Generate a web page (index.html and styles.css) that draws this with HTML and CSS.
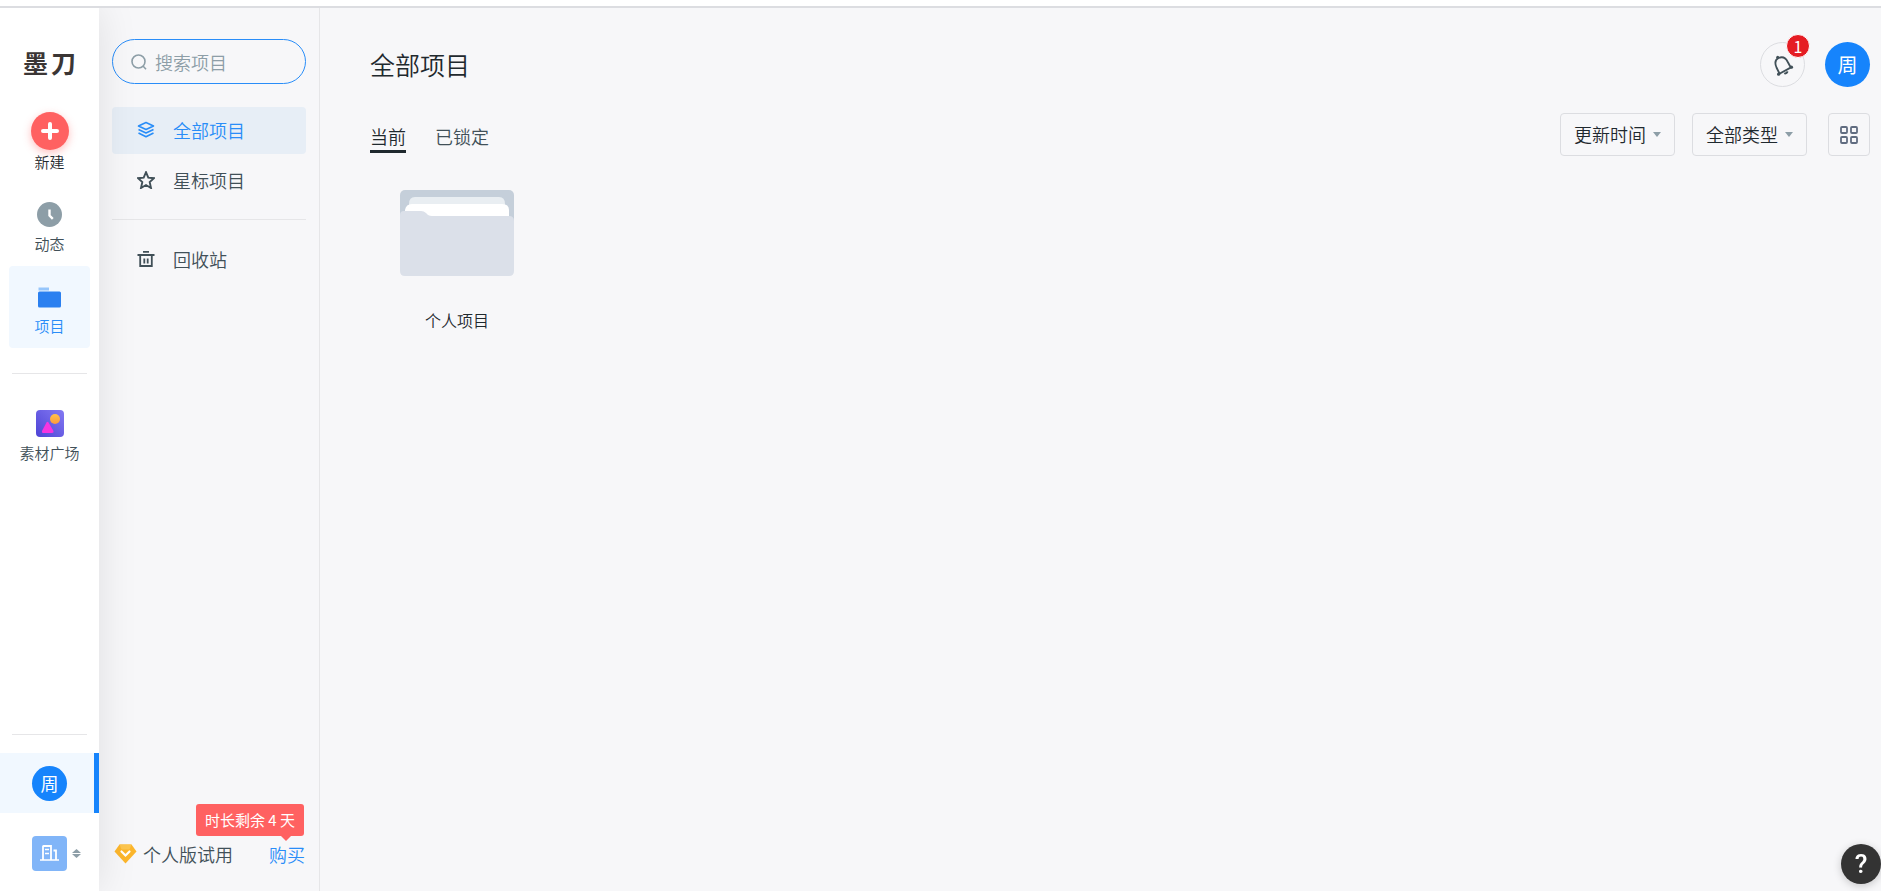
FILE: index.html
```html
<!DOCTYPE html>
<html lang="zh-CN">
<head>
    <meta charset="UTF-8">
    <meta name="viewport" content="width=device-width, initial-scale=1.0">
    <title>全部项目 - 墨刀</title>
    <link rel="stylesheet" href="styles.css">
</head>
<body>
    <div class="topbar"></div>

    <div class="app">
        <nav class="rail">
            <a class="logo" href="#"><span>墨</span><span>刀</span></a>

            <button class="rail-new" type="button">
                <span class="rail-new-circle">
                    <svg width="18" height="18" viewBox="0 0 18 18"><path d="M9 2v14M2 9h14" stroke="#fff" stroke-width="4" stroke-linecap="round"/></svg>
                </span>
                新建
            </button>

            <a class="rail-item" href="#">
                <svg width="25" height="25" viewBox="0 0 25 25"><circle cx="12.5" cy="12.5" r="12.5" fill="#8d9ea7"/><path d="M12.5 7.5v6l3.3 3.4" fill="none" stroke="#fff" stroke-width="2.4"/></svg>
                动态
            </a>
            <a class="rail-item active" href="#">
                <svg width="25" height="25" viewBox="0 0 25 25"><path d="M1.500 3.500h10.500v3H1.500z" fill="#96c6fb"/><rect x="1" y="7.500" width="23" height="16" rx="1.500" fill="#2b80f0"/></svg>
                项目
            </a>

            <hr class="rail-line">

            <a class="rail-item market" href="#">
                <svg width="28" height="27" viewBox="0 0 28 27">
                    <defs>
                        <linearGradient id="marketBg" x1="0" y1="1" x2="1" y2="0"><stop offset="0" stop-color="#4d43d6"/><stop offset="1" stop-color="#8479f2"/></linearGradient>
                        <linearGradient id="marketSun" x1="0" y1="0" x2="0" y2="1"><stop offset="0" stop-color="#ffc24a"/><stop offset="1" stop-color="#ff9a3c"/></linearGradient>
                    </defs>
                    <rect width="28" height="27" rx="4" fill="url(#marketBg)"/>
                    <path d="M10.500 12.500q1-1.500 2 0l5 8.500q.5 2-1.500 2H7q-1.500 0-1-2z" fill="#f535e0"/>
                    <circle cx="19" cy="9" r="5" fill="url(#marketSun)"/>
                </svg>
                素材广场
            </a>

            <div class="rail-bottom">
                <hr class="rail-line">
                <button class="team active" type="button"><span class="avatar">周</span></button>
                <button class="team" type="button" aria-label="企业">
                    <span class="company">
                        <svg width="19" height="16" viewBox="0 0 19 16" fill="none" stroke="#fff"><path d="M3 15V1.500Q3 1 3.500 1h7.500V15M13.500 5.500h2.500V15" stroke-width="1.800"/><path d="M5 4.500h4M5 8.500h4M0 15h19" stroke-width="1.600"/></svg>
                    </span>
                    <svg class="updown" width="9" height="9" viewBox="0 0 9 9"><path d="M4.500 0L9 4H0zM0 5h9L4.500 9z" fill="#8d9ea7"/></svg>
                </button>
            </div>
        </nav>

        <aside class="sidebar">
            <label class="search">
                <svg width="16" height="16" viewBox="0 0 16 16" fill="none" stroke="#8d9ea7" stroke-width="1.600"><circle cx="7.500" cy="7.500" r="6.500"/><path d="M12 12l3 3.200"/></svg>
                <input type="text" placeholder="搜索项目" aria-label="搜索项目">
            </label>

            <a class="side-item active" href="#">
                <svg width="18" height="18" viewBox="0 0 18 18" fill="none" stroke="currentColor" stroke-width="1.600" stroke-linejoin="round"><path d="M9 1.500l7.500 3.500L9 8.500 1.500 5zM1.500 8.500L9 12l7.500-3.500M1.500 12L9 15.800l7.500-3.800"/></svg>
                全部项目
            </a>
            <a class="side-item" href="#">
                <svg width="18" height="18" viewBox="0 0 18 18" fill="none" stroke="#415058" stroke-width="1.900"><path d="M9 1.200l2.300 5.400 5.700.6-4.300 3.900 1.300 5.900L9 14l-5 3 1.300-5.900L1 7.200l5.700-.6z"/></svg>
                星标项目
            </a>
            <hr class="side-line">
            <a class="side-item" href="#">
                <svg width="18" height="18" viewBox="0 0 18 18" fill="none" stroke="#415058" stroke-width="1.800"><path d="M.5 5h17M6 1.900h6M3.200 5v11h11.600V5M7.300 8.500v5M10.700 8.500v5"/></svg>
                回收站
            </a>

            <div class="plan">
                <svg width="23" height="20" viewBox="0 0 23 20"><path d="M5.500.5h12L22.500 7.500 11.500 19.500.5 7.500z" fill="#fcb62c"/><path d="M5.500.5h12l-2 5h-8z" fill="#fdc64f"/><path d="M7.500 7.500l4 4 4-4" fill="none" stroke="#fff" stroke-width="2.200" stroke-linecap="round"/></svg>
                <span class="plan-name">个人版试用</span>
                <a class="buy" href="#">购买</a>
                <span class="plan-tip">时长剩余 4 天</span>
            </div>
        </aside>

        <main class="main">
            <header class="header">
                <h1>全部项目</h1>
                <button class="bell" type="button" aria-label="通知">
                    <svg width="24" height="24" viewBox="0 0 24 24" fill="none" stroke="#415058" stroke-width="1.800"><path d="M8.500 20.500L5.500 14.500Q2.500 7.500 7.500 5Q13.500 2.500 16.500 8.500L19.500 14M7.500 21.300l13-7.200"/><path d="M13.300 20.200q2 1 3.300-1.900" stroke-width="2"/><g fill="#415058" stroke="none"><circle cx="6.700" cy="4.300" r="1.500"/><circle cx="7.600" cy="21.200" r="1.600"/><circle cx="20.500" cy="14.200" r="1.600"/></g></svg>
                    <span class="badge">1</span>
                </button>
                <button class="avatar large" type="button">周</button>
            </header>

            <div class="toolbar">
                <div class="tabs">
                    <a class="tab active" href="#">当前</a>
                    <a class="tab" href="#">已锁定</a>
                </div>
                <div class="filter">
                    <select aria-label="排序"><option>更新时间</option><option>创建时间</option></select>
                </div>
                <div class="filter">
                    <select aria-label="类型"><option>全部类型</option></select>
                </div>
                <button class="view" type="button" aria-label="切换视图">
                    <svg width="18" height="18" viewBox="0 0 18 18" fill="none" stroke="#606c80" stroke-width="1.800"><rect x="1" y="1" width="6" height="6" rx="1"/><rect x="11" y="1" width="6" height="6" rx="1"/><rect x="1" y="11" width="6" height="6" rx="1"/><rect x="11" y="11" width="6" height="6" rx="1"/></svg>
                </button>
            </div>

            <div class="projects">
                <a class="project" href="#">
                    <svg width="114" height="86" viewBox="0 0 114 86">
                        <rect width="114" height="60" rx="5" fill="#c5cfda"/>
                        <path d="M9 30V14q0-7 6-7h84q6 0 6 7v16z" fill="#e9eef2"/>
                        <path d="M5 40V20q1-6 7-6h90q7 0 7 6v20z" fill="#fff"/>
                        <path d="M0 81V25q0-4 4-4h17q3 0 5 2l2 2q2 1 4 1h77q5 0 5 5v50q0 5-5 5H5q-5 0-5-5z" fill="#dbe0e9"/>
                    </svg>
                    <span>个人项目</span>
                </a>
            </div>
        </main>
    </div>

    <button class="help" type="button" aria-label="帮助">?</button>
</body>
</html>
```

FILE: styles.css
```css
* {
    box-sizing: border-box;
}

body {
    display: flex;
    flex-direction: column;
    min-height: 100vh;
    margin: 0;
    font-family: "Noto Sans CJK SC", sans-serif;
    font-size: 18px;
    font-weight: 350;
    line-height: 24px;
    color: #1f292e;
    background: #f7f7f9;
}

a {
    color: inherit;
    text-decoration: none;
}

button {
    padding: 0;
    border: none;
    background: none;
    font: inherit;
    color: inherit;
    cursor: pointer;
}

hr {
    width: 100%;
    height: 1px;
    margin: 0;
    border: none;
    background: #e6e6e8;
}

svg {
    display: block;
    flex-shrink: 0;
}

.topbar {
    position: relative;
    z-index: 3;
    height: 8px;
    background: #fff;
    border-bottom: 2px solid #dcdde1;
}

.app {
    display: flex;
    flex: 1;
}

/* left rail */
.rail {
    position: relative;
    z-index: 2;
    display: flex;
    flex-direction: column;
    align-items: center;
    width: 99px;
    padding-top: 38px;
    background: #fff;
    box-shadow: 0 0 40px rgba(0, 0, 0, 0.1);
    font-size: 15px;
    line-height: 20px;
    color: #415058;
}

.logo {
    display: flex;
    gap: 3px;
    margin-bottom: 34px;
    font-size: 25px;
    font-weight: 700;
    line-height: 32px;
    color: #3b3635;
}

.rail-new {
    display: flex;
    flex-direction: column;
    align-items: center;
    gap: 2px;
    margin-bottom: 12px;
    color: #1f292e;
}

.rail-new-circle {
    display: flex;
    align-items: center;
    justify-content: center;
    width: 38px;
    height: 38px;
    border-radius: 50%;
    background: #ff6161;
    box-shadow: 0 3px 8px rgba(255, 97, 97, 0.4);
}

.rail-item {
    display: flex;
    flex-direction: column;
    align-items: center;
    gap: 7px;
    width: 81px;
    height: 82px;
    padding-top: 18px;
    border-radius: 4px;
}

.rail-item.active {
    background: #f1f8ff;
    color: #298df8;
}

.rail-line {
    width: 75px;
}

.rail > .rail-line {
    margin: 25px 0 18px;
}

.rail-item.market {
    gap: 6px;
}

.rail-bottom {
    display: flex;
    flex-direction: column;
    align-items: center;
    width: 100%;
    margin-top: auto;
    padding-bottom: 8px;
}

.rail-bottom .rail-line {
    margin-bottom: 18px;
}

.team {
    position: relative;
    display: flex;
    align-items: center;
    justify-content: center;
    width: 100%;
    height: 60px;
}

.team + .team {
    margin-top: 10px;
}

.team.active {
    background: #f1f8ff;
    border-right: 5px solid #1684fc;
    padding-left: 5px;
}

.avatar {
    display: flex;
    align-items: center;
    justify-content: center;
    width: 35px;
    height: 35px;
    border-radius: 50%;
    background: #1684fc;
    color: #fff;
    font-size: 18px;
    font-weight: 400;
}

.avatar.large {
    width: 45px;
    height: 45px;
    font-size: 20px;
}

.company {
    display: flex;
    align-items: center;
    justify-content: center;
    width: 35px;
    height: 35px;
    border-radius: 4px;
    background: #81b5f8;
}

.updown {
    position: absolute;
    right: 18px;
}

/* project navigation */
.sidebar {
    display: flex;
    flex-direction: column;
    width: 221px;
    padding: 31px 13px 25px;
    border-right: 1px solid #e6e6e8;
    color: #415058;
}

.search {
    display: flex;
    align-items: center;
    gap: 8px;
    height: 45px;
    margin-bottom: 23px;
    padding: 0 18px;
    border: 1px solid #298df8;
    border-radius: 23px;
}

.search input {
    width: 100%;
    min-width: 0;
    padding: 0;
    border: none;
    outline: none;
    background: none;
    font: inherit;
    color: inherit;
}

.search input::placeholder {
    color: #8d9ea7;
}

.side-item {
    display: flex;
    align-items: center;
    gap: 18px;
    height: 47px;
    margin-bottom: 3px;
    padding: 0 25px 2px;
    border-radius: 4px;
}

.side-item.active {
    background: #e7eef6;
    color: #298df8;
}

.side-line {
    margin: 12px 0 16px;
}

.plan {
    position: relative;
    display: flex;
    align-items: center;
    gap: 6px;
    margin-top: auto;
    padding: 0 1px 0 2px;
}

.plan-name {
    white-space: nowrap;
}

.buy {
    margin-left: auto;
    color: #298df8;
}

.plan-tip {
    position: absolute;
    right: 2px;
    bottom: 30px;
    height: 32px;
    padding: 0 9px;
    border-radius: 3px;
    background: #ff6161;
    color: #fff;
    font-size: 15px;
    font-weight: 400;
    line-height: 32px;
    white-space: nowrap;
}

.plan-tip::after {
    content: "";
    position: absolute;
    top: 100%;
    right: 13px;
    border: 5px solid transparent;
    border-top-color: #ff6161;
    border-bottom: none;
}

/* content */
.main {
    flex: 1;
    padding: 34px 11px 0 50px;
}

.header {
    display: flex;
    align-items: center;
    gap: 20px;
}

.header h1 {
    flex: 1;
    margin: 0;
    padding-bottom: 2px;
    font-size: 25px;
    font-weight: 350;
    line-height: 32px;
}

.bell {
    position: relative;
    display: flex;
    align-items: center;
    justify-content: center;
    width: 45px;
    height: 45px;
    border: 1px solid #dcdde1;
    border-radius: 50%;
}

.badge {
    position: absolute;
    top: -9px;
    right: -6px;
    width: 24px;
    height: 24px;
    border: 1px solid #fff;
    border-radius: 50%;
    background: #e51c23;
    color: #fff;
    font-size: 16px;
    font-weight: 400;
    line-height: 22px;
    text-align: center;
}

.toolbar {
    display: flex;
    align-items: center;
    margin-top: 26px;
}

.tabs {
    display: flex;
    gap: 29px;
    flex: 1;
    padding-top: 4px;
}

.tab {
    padding: 4px 0 2px;
    border-bottom: 3px solid transparent;
    color: #415058;
}

.tab.active {
    border-color: #1f292e;
    color: #1f292e;
}

.filter {
    position: relative;
    margin-right: 17px;
}

.filter::after {
    content: "";
    position: absolute;
    top: 19px;
    right: 14px;
    border: 4px solid transparent;
    border-top: 5px solid #8d9ea7;
    border-bottom: none;
    pointer-events: none;
}

.filter select {
    display: block;
    width: 115px;
    height: 43px;
    padding: 0 13px 2px;
    border: 1px solid #dcdde1;
    border-radius: 4px;
    appearance: none;
    background: none;
    font: inherit;
    color: inherit;
}

.view {
    display: flex;
    align-items: center;
    justify-content: center;
    width: 42px;
    height: 43px;
    margin-left: 4px;
    border: 1px solid #dcdde1;
    border-radius: 4px;
}

.projects {
    display: flex;
    flex-wrap: wrap;
    padding-top: 34px;
}

.project {
    display: flex;
    flex-direction: column;
    align-items: center;
    gap: 32px;
    width: 174px;
    font-size: 16px;
}

.help {
    position: fixed;
    right: 0;
    bottom: 7px;
    z-index: 4;
    width: 40px;
    height: 40px;
    border-radius: 50%;
    background: #333;
    box-shadow: 0 2px 8px rgba(0, 0, 0, 0.2);
    color: #fff;
    font-family: Roboto, sans-serif;
    font-size: 26px;
    font-weight: 500;
    line-height: 40px;
}
```
